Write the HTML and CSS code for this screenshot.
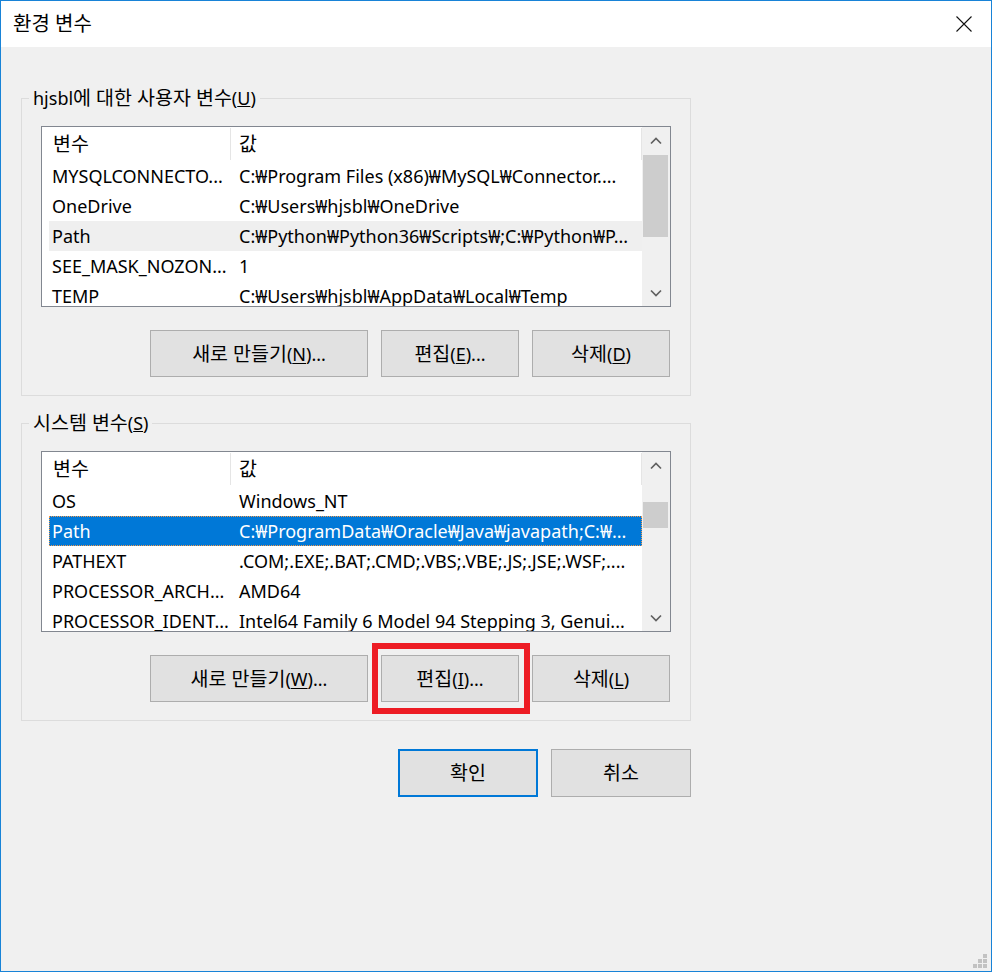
FILE: index.html
```html
<!DOCTYPE html>
<html lang="ko">
<head>
<meta charset="utf-8">
<title>환경 변수</title>
<link rel="stylesheet" href="styles.css">
</head>
<body>
<div class="window">
  <div class="titlebar">
    <span class="title ko">환경 변수</span>
    <svg class="close" width="16" height="16" viewBox="0 0 16 16"><path d="M0.5 0.5 L15.5 15.5 M15.5 0.5 L0.5 15.5" stroke="#111" stroke-width="1.1" fill="none"/></svg>
  </div>
  <div class="content">
    <fieldset class="group">
      <legend>hjsbl<span class="ko">에 대한 사용자 변수</span>(<u>U</u>)</legend>
      <div class="list">
        <div class="list-main">
          <div class="list-head"><div class="hcell c1"><span class="ko">변수</span></div><div class="hcell c2"><span class="ko">값</span></div></div>
          <div class="row"><span class="cell c1">MYSQLCONNECTO...</span><span class="cell c2">C:₩Program Files (x86)₩MySQL₩Connector....</span></div>
          <div class="row"><span class="cell c1">OneDrive</span><span class="cell c2">C:₩Users₩hjsbl₩OneDrive</span></div>
          <div class="row row-inactive"><span class="cell c1">Path</span><span class="cell c2">C:₩Python₩Python36₩Scripts₩;C:₩Python₩P...</span></div>
          <div class="row"><span class="cell c1">SEE_MASK_NOZON...</span><span class="cell c2">1</span></div>
          <div class="row"><span class="cell c1">TEMP</span><span class="cell c2">C:₩Users₩hjsbl₩AppData₩Local₩Temp</span></div>
        </div>
        <div class="scrollbar">
          <div class="sb-btn"><svg width="12" height="8" viewBox="0 0 12 8"><path d="M1 6.5 L6 1.5 L11 6.5" stroke="#606060" stroke-width="1.7" fill="none"/></svg></div>
          <div class="sb-track"><div class="thumb thumb-user"></div></div>
          <div class="sb-btn"><svg width="12" height="8" viewBox="0 0 12 8"><path d="M1 1.5 L6 6.5 L11 1.5" stroke="#606060" stroke-width="1.7" fill="none"/></svg></div>
        </div>
      </div>
      <div class="btn-row">
        <button class="btn btn-wide"><span class="ko">새로 만들기</span>(<u>N</u>)...</button>
        <button class="btn"><span class="ko">편집</span>(<u>E</u>)...</button>
        <button class="btn"><span class="ko">삭제</span>(<u>D</u>)</button>
      </div>
    </fieldset>

    <fieldset class="group group-system">
      <legend><span class="ko">시스템 변수</span>(<u>S</u>)</legend>
      <div class="list">
        <div class="list-main">
          <div class="list-head"><div class="hcell c1"><span class="ko">변수</span></div><div class="hcell c2"><span class="ko">값</span></div></div>
          <div class="row"><span class="cell c1">OS</span><span class="cell c2">Windows_NT</span></div>
          <div class="row row-selected"><span class="cell c1">Path</span><span class="cell c2">C:₩ProgramData₩Oracle₩Java₩javapath;C:₩...</span></div>
          <div class="row"><span class="cell c1">PATHEXT</span><span class="cell c2">.COM;.EXE;.BAT;.CMD;.VBS;.VBE;.JS;.JSE;.WSF;....</span></div>
          <div class="row"><span class="cell c1">PROCESSOR_ARCH...</span><span class="cell c2">AMD64</span></div>
          <div class="row"><span class="cell c1">PROCESSOR_IDENT...</span><span class="cell c2">Intel64 Family 6 Model 94 Stepping 3, Genui...</span></div>
        </div>
        <div class="scrollbar">
          <div class="sb-btn"><svg width="12" height="8" viewBox="0 0 12 8"><path d="M1 6.5 L6 1.5 L11 6.5" stroke="#606060" stroke-width="1.7" fill="none"/></svg></div>
          <div class="sb-track"><div class="thumb thumb-system"></div></div>
          <div class="sb-btn"><svg width="12" height="8" viewBox="0 0 12 8"><path d="M1 1.5 L6 6.5 L11 1.5" stroke="#606060" stroke-width="1.7" fill="none"/></svg></div>
        </div>
      </div>
      <div class="btn-row">
        <button class="btn btn-wide"><span class="ko">새로 만들기</span>(<u>W</u>)...</button>
        <div class="mark-wrap">
          <button class="btn"><span class="ko">편집</span>(<u>I</u>)...</button>
          <span class="mark"></span>
        </div>
        <button class="btn"><span class="ko">삭제</span>(<u>L</u>)</button>
      </div>
    </fieldset>

    <div class="dialog-buttons">
      <button class="btn btn-dialog btn-default"><span class="ko">확인</span></button>
      <button class="btn btn-dialog"><span class="ko">취소</span></button>
    </div>
  </div>
  <svg class="grip" width="14" height="14" viewBox="0 0 14 14">
    <rect x="10" y="0" width="4" height="4" fill="#c2c2c2"/>
    <rect x="5" y="5" width="4" height="4" fill="#c2c2c2"/>
    <rect x="10" y="5" width="4" height="4" fill="#c2c2c2"/>
    <rect x="0" y="10" width="4" height="4" fill="#c2c2c2"/>
    <rect x="5" y="10" width="4" height="4" fill="#c2c2c2"/>
    <rect x="10" y="10" width="4" height="4" fill="#c2c2c2"/>
  </svg>
</div>
</body>
</html>
```
FILE: styles.css
```css
* { box-sizing: border-box; }
html, body { margin: 0; padding: 0; }
body {
  font-family: "Noto Sans", "Noto Sans CJK KR", sans-serif;
  font-size: 18px;
  color: #000;
  background: #f0f0f0;
}
.ko { font-size: 19.5px; line-height: 0; }
.window {
  width: 992px;
  height: 972px;
  border: 1px solid #1883d7;
  background: #f0f0f0;
  position: relative;
  display: flex;
  flex-direction: column;
}
.titlebar {
  height: 46px;
  flex: none;
  background: #fff;
  display: flex;
  align-items: center;
  justify-content: space-between;
  padding-left: 12px;
  padding-right: 19px;
}
.title.ko { font-size: 20px; line-height: 24px; }
.close { display: block; }
.content { padding: 40px 0 0 20px; }
.group {
  width: 670px;
  margin: 0;
  border: 1px solid #dcdcdc;
  padding: 16px 19px 18px 19px;
}
.group-system { margin-top: 16px; }
.group legend {
  padding: 0 4px;
  margin-left: -12px;
  font-size: 18px;
  line-height: 23px;
  height: 23px;
}
.list {
  height: 181px;
  border: 1px solid #828790;
  background: #fff;
  display: flex;
}
.list-main { width: 600px; overflow: hidden; }
.list-head {
  height: 34px;
  display: flex;
  padding: 1px 0;
}
.hcell {
  border-right: 1px solid #e5e5e5;
  display: flex;
  align-items: center;
  line-height: 24px;
}
.hcell.c1 { width: 189px; padding-left: 11px; }
.hcell.c2 { flex: 1; padding-left: 8px; }
.row {
  height: 30px;
  margin-left: 7px;
  display: flex;
  align-items: center;
  white-space: nowrap;
  line-height: 24px;
}
.cell { overflow: hidden; white-space: nowrap; }
.cell.c1 { width: 187px; flex: none; padding-left: 3px; }
.cell.c2 { flex: 1; padding-left: 3px; }
.row-inactive { background: #efefef; }
.row-selected {
  background: #0078d7;
  color: #fff;
  outline: 1px dotted #f39a4c;
  outline-offset: -1px;
}
.scrollbar {
  width: 28px;
  flex: none;
  background: #f0f0f0;
  display: flex;
  flex-direction: column;
}
.sb-btn {
  height: 27px;
  flex: none;
  display: flex;
  align-items: center;
  justify-content: center;
  padding-right: 1px;
}
.sb-btn svg { display: block; }
.sb-track { flex: 1; padding: 0 2px 0 1px; }
.thumb { background: #cdcdcd; }
.thumb-user { margin-top: 1px; height: 82px; }
.thumb-system { margin-top: 23px; height: 26px; }
.btn-row {
  display: flex;
  justify-content: flex-end;
  gap: 13px;
  margin-top: 23px;
  padding-right: 1px;
}
.btn {
  font: inherit;
  font-size: 18px;
  line-height: 24px;
  color: #000;
  background: #e1e1e1;
  border: 1px solid #adadad;
  height: 47px;
  width: 138px;
  padding: 0;
  margin: 0;
  display: flex;
  align-items: center;
  justify-content: center;
}
.btn-wide { width: 218px; }
.btn u { text-underline-offset: 2px; }
.mark-wrap { position: relative; display: flex; }
.mark {
  position: absolute;
  left: -9px;
  right: -11px;
  top: -12px;
  bottom: -12px;
  border: 6px solid #ed1c24;
  pointer-events: none;
}
.dialog-buttons {
  width: 670px;
  display: flex;
  justify-content: flex-end;
  gap: 13px;
  margin-top: 28px;
}
.btn-dialog { width: 140px; height: 48px; }
.btn-default { border: 2px solid #0078d7; }
.grip { position: absolute; right: 4px; bottom: 3px; display: block; }
```
